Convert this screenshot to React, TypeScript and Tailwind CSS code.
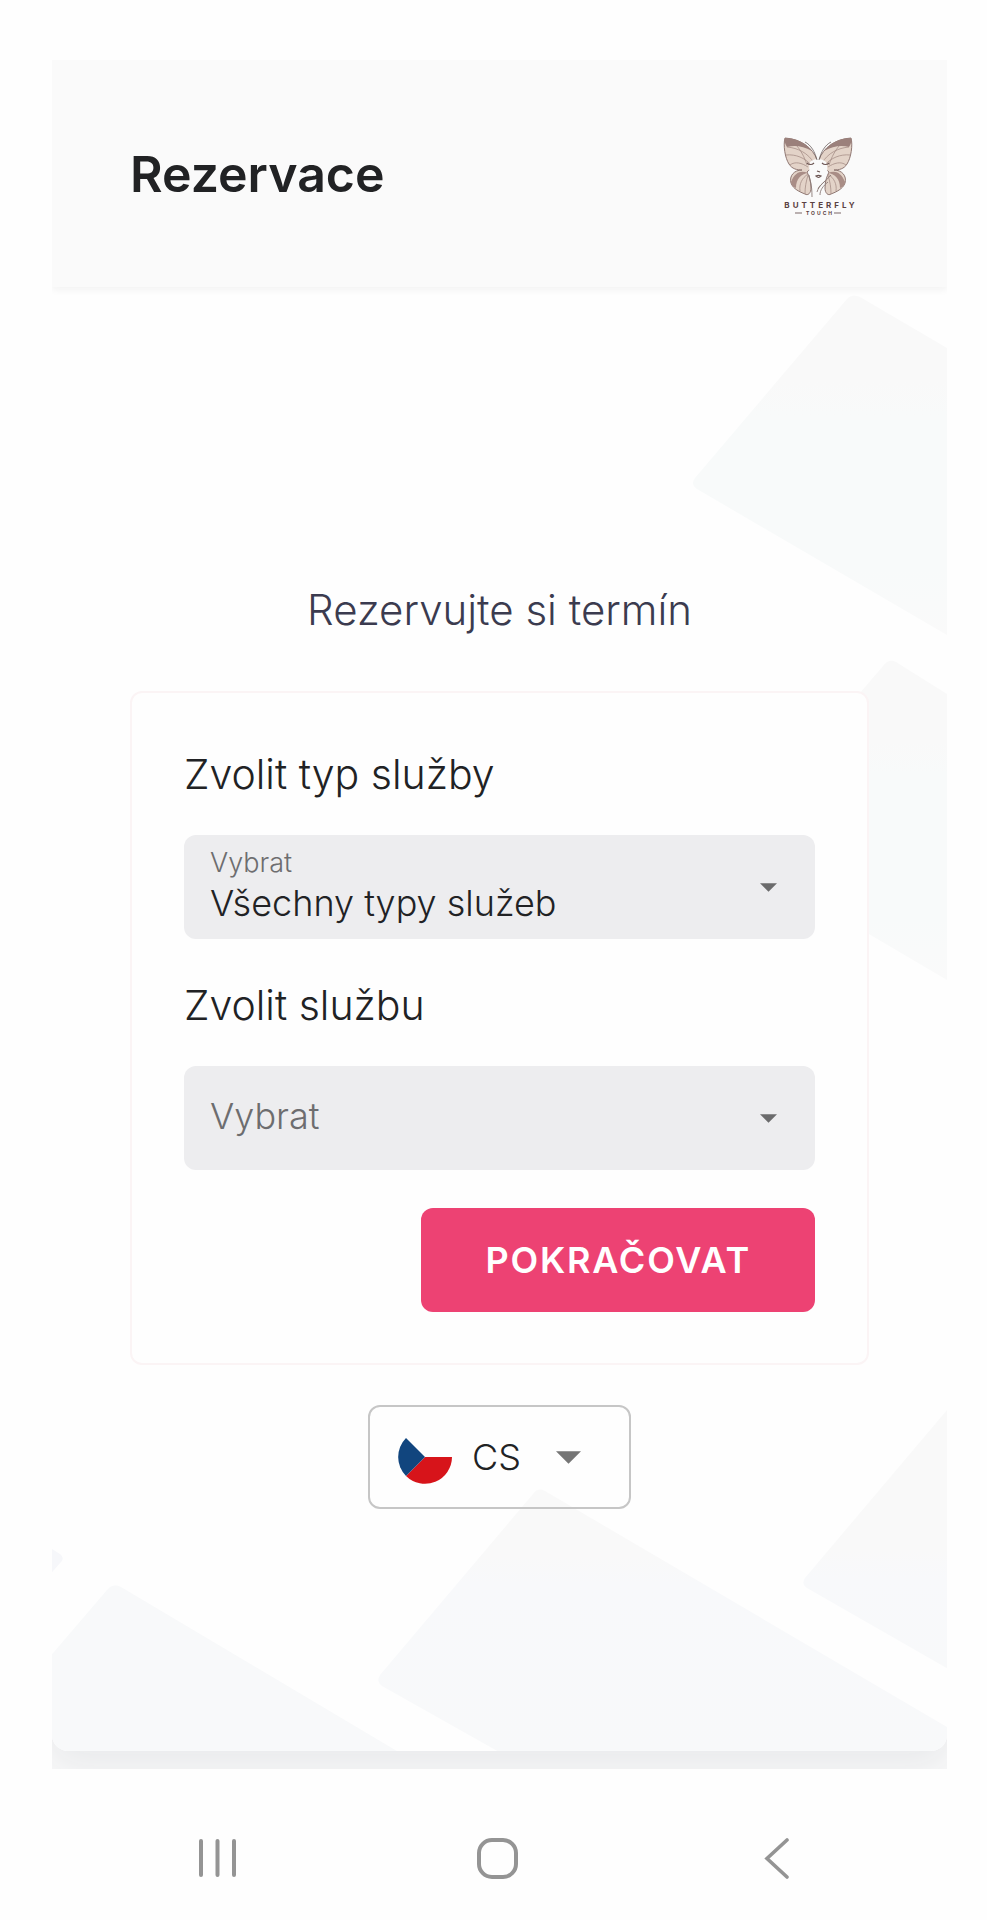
import { useState, type ReactNode } from "react";

function ButterflyLogo() {
  const wing = (
    <>
      <path
        d="M34 24 C30 12 18 3 2 2 C0 9 2 22 6 28 C9 33 14 34 19 34 C11 34 6 40 8 47 C10 53 17 56 22 58 C25 60 28 57 28 52 C28 45 26 40 24 36 C27 33 32 30 34 24Z"
        fill="#e3d3c8"
        stroke="#8f7772"
        strokeWidth="1"
      />
      <path d="M2 2 C14 2 24 8 29 15 C20 10 12 9 4 11 C2 8 1 5 2 2Z" fill="#9b807b" />
      <path d="M8 46 C12 36 18 34 25 37 C18 38 13 43 13 52 C10 51 8 49 8 46Z" fill="#a98d86" />
      <path
        d="M4 11 C15 12 25 17 31 27 M3 19 C13 18 22 22 28 29 M7 29 C12 25 19 27 25 31 M25 38 C19 42 16 48 17 55 M25 39 C23 46 22 51 22 58 M14 10 C18 15 21 20 24 29"
        fill="none"
        stroke="#a78f88"
        strokeWidth="0.8"
      />
    </>
  );
  return (
    <svg viewBox="0 0 72 80" className="mt-1 h-20 w-[72px] overflow-visible" role="img" aria-label="Butterfly Touch">
      {wing}
      <g transform="translate(70 0) scale(-1 1)">{wing}</g>
      <path d="M27 26 C31 22 39 22 43 26 C46 34 44 43 36 49 C29 45 24 35 27 26Z" fill="#fafafa" />
      <path
        d="M34 24 C32 16 28 9 22 6 M36 24 C38 16 42 9 48 6"
        fill="none"
        stroke="#6d6261"
        strokeWidth="0.8"
      />
      <path
        d="M24 27 C26 29 29 29 31 27 M39 27 C41 29 44 29 46 27 M34 35 L37 36 M33 40 C35 39 36 39 38 40 C36 42 35 42 33 40Z"
        fill="none"
        stroke="#6b5452"
        strokeWidth="1.2"
      />
      <path
        d="M26 39 C27 45 29 48 29 61 M48 39 C42 46 36 49 34 56 M45 46 C40 50 37 54 37 59 M42 45 C39 48 36 50 35 53"
        fill="none"
        stroke="#8a7976"
        strokeWidth="0.9"
      />
      <text
        x="38"
        y="72"
        textAnchor="middle"
        className="fill-[#5a4142] font-['Inter'] text-[8px] font-bold tracking-[3px]"
      >
        BUTTERFLY
      </text>
      <text
        x="37"
        y="79"
        textAnchor="middle"
        className="fill-[#5a4142] font-['Inter'] text-[5px] font-bold tracking-[2px]"
      >
        TOUCH
      </text>
      <path d="M12 77 H19 M51 77 H58" stroke="#7b6766" strokeWidth="1" />
    </svg>
  );
}

function Backdrop() {
  return (
    <svg
      viewBox="0 0 895 1464"
      preserveAspectRatio="xMidYMax slice"
      className="absolute inset-0 h-full w-full"
      aria-hidden="true"
    >
      <defs>
        <linearGradient id="upper" x1="0" y1="0" x2="0" y2="1">
          <stop offset="0" stopColor="#f9f9f9" />
          <stop offset="0.25" stopColor="#f9f9f9" />
          <stop offset="0.35" stopColor="#f8fafa" />
          <stop offset="0.8" stopColor="#f8fafa" />
          <stop offset="1" stopColor="#fafafa" />
        </linearGradient>
        <linearGradient id="lower" x1="0" y1="0" x2="0" y2="1">
          <stop offset="0" stopColor="#f9f9f9" />
          <stop offset="0.25" stopColor="#f9f9f9" />
          <stop offset="0.35" stopColor="#f8f9fb" />
          <stop offset="1" stopColor="#f8f9fa" />
        </linearGradient>
        <linearGradient id="side" x1="0" y1="0" x2="0" y2="1">
          <stop offset="0" stopColor="#f9f9f9" />
          <stop offset="0.55" stopColor="#f9f9f9" />
          <stop offset="0.65" stopColor="#f8f9fb" />
          <stop offset="1" stopColor="#f8f9fa" />
        </linearGradient>
      </defs>
      <path d="M795 12 Q800 6 808 10 L900 64 V351 L645 202 Q638 197 643 191Z" fill="url(#upper)" />
      <path d="M831 379 Q837 371 844 375 L900 410 V696 L681 567 Q675 562 679 557Z" fill="url(#upper)" />
      <path d="M900 1117 V1384 L755 1301 Q749 1297 753 1291Z" fill="url(#side)" />
      <path d="M481 1207 Q486 1200 493 1204 L900 1443 V1470 H456 L330 1399 Q324 1395 328 1388Z" fill="url(#lower)" />
      <path d="M55 1303 Q61 1296 69 1300 L355 1470 H-5 V1373Z" fill="#f8f9fa" />
      <path d="M-5 1259 L8 1267 Q13 1271 9 1275 L-5 1291Z" fill="#f6f7fa" />
    </svg>
  );
}

function Caret({ className }: { className: string }) {
  return (
    <svg viewBox="0 0 10 5" className={className} aria-hidden="true">
      <path d="M0 0 H10 L5 5Z" fill="currentColor" />
    </svg>
  );
}

function Field({ id, title, children }: { id: string; title: string; children: ReactNode }) {
  return (
    <div>
      <h2 className="text-[41px] leading-12 font-light" id={id + "-title"}>
        {title}
      </h2>
      <div className="relative mt-[37px] h-[104px] rounded-xl bg-[#ededef]">
        {children}
        <Caret className="pointer-events-none absolute top-12 right-[38px] h-[9px] w-[17px] text-[#6b6b6c]" />
      </div>
    </div>
  );
}

function CzechFlag() {
  return (
    <svg viewBox="0 0 54 54" className="size-[54px]" aria-hidden="true">
      <path d="M27 27 H54 A27 27 0 0 1 8 46Z" fill="#d7141a" />
      <path d="M27 27 L8 8 A27 27 0 0 0 8 46Z" fill="#11457e" />
    </svg>
  );
}

export default function App() {
  const [type, setType] = useState("all");
  const [service, setService] = useState("");
  const [lang, setLang] = useState("cs");

  return (
    <div className="min-h-screen bg-[#fefefe] pt-[60px] font-['Inter','Noto_Sans',sans-serif] text-[#212224]">
      <div className="mr-10 ml-[52px] overflow-hidden bg-[#fbfbfb] pb-[18px]">
        <div className="rounded-b-2xl bg-[#fefefe] shadow-[0_12px_40px_8px_#e9eaec]">
          <header className="relative z-10 flex h-[227px] items-center justify-between bg-[#fafafa] pr-[92px] pl-[78px] shadow-[0_2px_8px_#f0f0f0]">
            <h1 className="text-[50px] leading-16 font-semibold">Rezervace</h1>
            <ButterflyLogo />
          </header>

          <main className="relative flex flex-col overflow-hidden rounded-b-2xl px-[78px] pt-[295px] pb-[242px]">
            <Backdrop />
            <p className="relative text-center text-[42px] leading-14 font-light text-[#3b3b4f]">
              Rezervujte si termín
            </p>

            <form
              className="relative mt-[53px] flex flex-col gap-[42px] rounded-xl border-2 border-[#fbf4f5] bg-[#fefefe] px-[52px] pt-[57px] pb-[51px]"
              onSubmit={(e) => e.preventDefault()}
            >
              <Field id="type" title="Zvolit typ služby">
                <label htmlFor="type" className="absolute top-3 left-[26px] text-[27px] leading-8 font-light text-[#6d6d6f]">
                  Vybrat
                </label>
                <select
                  id="type"
                  value={type}
                  onChange={(e) => setType(e.target.value)}
                  className="h-full w-full appearance-none rounded-xl bg-transparent pt-8 pr-16 pl-[26px] text-[36px] leading-11 font-light"
                >
                  <option value="all">Všechny typy služeb</option>
                </select>
              </Field>

              <Field id="service" title="Zvolit službu">
                <select
                  id="service"
                  aria-labelledby="service-title"
                  value={service}
                  onChange={(e) => setService(e.target.value)}
                  className="h-full w-full appearance-none rounded-xl bg-transparent pr-16 pb-1 pl-[26px] text-[36px] leading-11 font-light text-[#6d6d6f]"
                >
                  <option value="">Vybrat</option>
                </select>
              </Field>

              <button
                type="submit"
                className="-mt-1 h-[104px] self-end rounded-xl bg-[#ed4273] px-16 text-[36px] leading-11 font-semibold tracking-wider text-white"
              >
                POKRAČOVAT
              </button>
            </form>

            <div className="relative mt-10 flex h-[104px] items-center self-center rounded-xl border-2 border-[#c6c6c6] pl-7">
              <CzechFlag />
              <select
                aria-label="Jazyk"
                value={lang}
                onChange={(e) => setLang(e.target.value)}
                className="h-full w-[177px] appearance-none bg-transparent pl-5 text-[36px] leading-11 font-light"
              >
                <option value="cs">CS</option>
              </select>
              <Caret className="pointer-events-none absolute top-11 right-12 h-[13px] w-[25px] text-[#757575]" />
            </div>
          </main>
        </div>
      </div>

      <nav className="grid grid-cols-3 justify-items-center pt-[69px] pr-[70px] pb-[41px] pl-[77px]" aria-label="Systém">
        <button type="button" aria-label="Poslední aplikace">
          <svg viewBox="0 0 41 41" className="size-[41px]" fill="none" stroke="#949494" strokeWidth="4" strokeLinecap="round">
            <path d="M4 3 V37 M20.500 3 V37 M37 3 V37" />
          </svg>
        </button>
        <button type="button" aria-label="Domů">
          <svg viewBox="0 0 41 41" className="size-[41px]" fill="none" stroke="#949494" strokeWidth="4">
            <rect x="2" y="2" width="37" height="37" rx="13" />
          </svg>
        </button>
        <button type="button" aria-label="Zpět">
          <svg viewBox="0 0 41 41" className="size-[41px]" fill="none" stroke="#949494" strokeWidth="3.600" strokeLinecap="round">
            <path d="M30 2 L10 20.500 L30 39" />
          </svg>
        </button>
      </nav>
    </div>
  );
}
